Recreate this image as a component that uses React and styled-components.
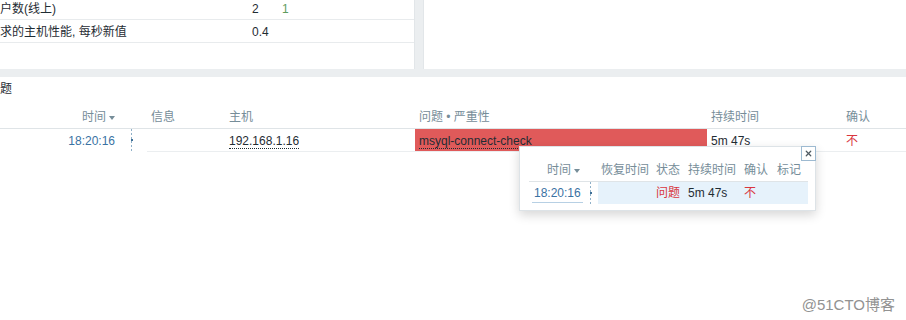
import React from "react";
import styled, { createGlobalStyle } from "styled-components";
import { X } from "lucide-react";

const GlobalStyle = createGlobalStyle`
  html, body {
    margin: 0;
    padding: 0;
  }
  body {
    background: #ebeef0;
    font-family: "Liberation Sans", Arial, "Noto Sans CJK SC", sans-serif;
    font-size: 12px;
    color: #1f2c33;
  }
`;

const Page = styled.div`
  position: relative;
  width: 906px;
  height: 320px;
  overflow: hidden;
  background: #ebeef0;
  display: flex;
  flex-direction: column;
  gap: 8px;
`;

const TopRow = styled.div`
  display: flex;
  gap: 8px;
  height: 69px;
  flex: none;
`;

const Widget = styled.div`
  background: #fff;
  box-sizing: border-box;
  overflow: hidden;
  ${(p) => (p.$width ? `width: ${p.$width}px; flex: none;` : "flex: 1;")}
  ${(p) => p.$borderRight && "border-right: 1px solid #e2e6e9;"}
  ${(p) => p.$borderLeft && "border-left: 1px solid #e2e6e9;"}
`;

const BottomWidget = styled.div`
  flex: 1;
  background: #fff;
`;

const WidgetHead = styled.div`
  height: 24px;
  line-height: 24px;
  font-size: 12px;
  color: #1f2c33;
`;

const Table = styled.table`
  table-layout: fixed;
  border-collapse: collapse;
  border-spacing: 0;
  width: ${(p) => p.$width}px;
  margin-top: ${(p) => p.$offset || 0}px;
`;

const ItemCell = styled.td`
  line-height: 14px;
  padding: 5px 4px 3px;
  border-bottom: 1px solid #e8ebed;
  white-space: nowrap;
  color: ${(p) => p.$color || "#1f2c33"};
  padding-left: ${(p) => (p.$flush ? 0 : 4)}px;
`;

const Th = styled.th`
  font-weight: normal;
  color: #768d99;
  text-align: ${(p) => p.$align || "left"};
  line-height: 14px;
  padding: 9px ${(p) => (p.$right ? p.$right : 4)}px 4px 4px;
  border-bottom: 1px solid #dfe4e7;
  white-space: nowrap;
`;

const Td = styled.td`
  line-height: 14px;
  padding: 5px ${(p) => (p.$right ? p.$right : 4)}px 3px ${(p) => (p.$bare ? 0 : 4)}px;
  text-align: ${(p) => p.$align || "left"};
  border-bottom: ${(p) => (p.$noLine ? "none" : "1px solid #ebeef0")};
  background: ${(p) => p.$bg || "transparent"};
  color: ${(p) => p.$color || "#1f2c33"};
  white-space: nowrap;
  ${(p) => p.$bare && "padding: 0;"}
`;

const SortArrow = styled.span`
  display: inline-block;
  width: 0;
  height: 0;
  margin-left: 3px;
  vertical-align: middle;
  border-left: 3px solid transparent;
  border-right: 3px solid transparent;
  border-top: 4px solid #768d99;
`;

const TimeLink = styled.span`
  color: #3a72a3;
  ${(p) => p.$underline && "border-bottom: 1px solid #b7d0e4; padding: 0 2px 2px;"}
`;

const DottedLink = styled.span`
  border-bottom: 1px dotted #1f2c33;
`;

const Timeline = styled.div`
  display: flex;
  align-items: center;
  justify-content: center;
  width: 1px;
  height: ${(p) => p.$h}px;
  margin-left: ${(p) => p.$offset}px;
  background: repeating-linear-gradient(to bottom, #8fb0c8 0 2px, transparent 2px 4px);
`;

const TimelineDot = styled.span`
  width: 2px;
  height: 2px;
  flex: none;
  background: #3f6f96;
`;

const Popup = styled.div`
  position: absolute;
  left: 519px;
  top: 146px;
  width: 297px;
  box-sizing: border-box;
  padding: 11px 7px 6px 9px;
  background: #fff;
  border: 1px solid #dde3e7;
  box-shadow: 0 4px 10px rgba(0, 0, 0, 0.16);
`;

const CloseButton = styled.button`
  position: absolute;
  top: -1px;
  right: -1px;
  width: 15px;
  height: 15px;
  padding: 0;
  display: flex;
  align-items: center;
  justify-content: center;
  background: #fff;
  border: 1px solid #9dbad1;
  color: #4f5b62;
  cursor: pointer;
`;

const PopTh = styled.th`
  font-weight: normal;
  color: #768d99;
  text-align: ${(p) => p.$align || "left"};
  line-height: 14px;
  padding: 5px ${(p) => (p.$right ? p.$right : 3)}px 4px 3px;
  border-bottom: 1px solid #dfe4e7;
  white-space: nowrap;
`;

const PopTd = styled.td`
  line-height: 14px;
  padding: 4px ${(p) => (p.$right ? p.$right : 3)}px 4px 3px;
  text-align: ${(p) => p.$align || "left"};
  background: ${(p) => (p.$band ? "#e6f2fb" : "transparent")};
  color: ${(p) => p.$color || "#1f2c33"};
  white-space: nowrap;
  ${(p) => p.$bare && "padding: 0;"}
`;

const Watermark = styled.div`
  position: absolute;
  right: 11px;
  bottom: 6px;
  font-size: 15px;
  line-height: 18px;
  color: #929292;
`;

const RED = "#d9363e";

export default function App() {
  return (
    <>
      <GlobalStyle />
      <Page>
        <TopRow>
          <Widget $width={415} $borderRight>
            <Table $width={414} $offset={-3}>
              <colgroup>
                <col style={{ width: 248 }} />
                <col style={{ width: 30 }} />
                <col />
              </colgroup>
              <tbody>
                <tr>
                  <ItemCell $flush>户数(线上)</ItemCell>
                  <ItemCell>2</ItemCell>
                  <ItemCell $color="#5e9c5e">1</ItemCell>
                </tr>
                <tr>
                  <ItemCell $flush>求的主机性能, 每秒新值</ItemCell>
                  <ItemCell>0.4</ItemCell>
                  <ItemCell />
                </tr>
              </tbody>
            </Table>
          </Widget>
          <Widget $borderLeft />
        </TopRow>

        <BottomWidget>
          <WidgetHead>题</WidgetHead>
          <Table $width={906}>
            <colgroup>
              <col style={{ width: 123 }} />
              <col style={{ width: 24 }} />
              <col style={{ width: 78 }} />
              <col style={{ width: 190 }} />
              <col style={{ width: 292 }} />
              <col style={{ width: 135 }} />
              <col />
            </colgroup>
            <thead>
              <tr>
                <Th $align="right" $right={8}>
                  时间<SortArrow />
                </Th>
                <Th />
                <Th>信息</Th>
                <Th>主机</Th>
                <Th>问题 • 严重性</Th>
                <Th>持续时间</Th>
                <Th>确认</Th>
              </tr>
            </thead>
            <tbody>
              <tr>
                <Td $align="right" $right={8} $noLine>
                  <TimeLink>18:20:16</TimeLink>
                </Td>
                <Td $bare $noLine>
                  <Timeline $h={22} $offset={8}>
                    <TimelineDot />
                  </Timeline>
                </Td>
                <Td />
                <Td>
                  <DottedLink>192.168.1.16</DottedLink>
                </Td>
                <Td $bg="#e05a5a">
                  <DottedLink>msyql-connect-check</DottedLink>
                </Td>
                <Td>5m 47s</Td>
                <Td $color={RED}>不</Td>
              </tr>
            </tbody>
          </Table>
        </BottomWidget>

        <Popup>
          <CloseButton aria-label="关闭">
            <X size={9} strokeWidth={3.2} />
          </CloseButton>
          <Table $width={279}>
            <colgroup>
              <col style={{ width: 55 }} />
              <col style={{ width: 14 }} />
              <col style={{ width: 55 }} />
              <col style={{ width: 32 }} />
              <col style={{ width: 56 }} />
              <col style={{ width: 33 }} />
              <col />
            </colgroup>
            <thead>
              <tr>
                <PopTh $align="right" $right={4}>
                  时间<SortArrow />
                </PopTh>
                <PopTh />
                <PopTh>恢复时间</PopTh>
                <PopTh>状态</PopTh>
                <PopTh>持续时间</PopTh>
                <PopTh>确认</PopTh>
                <PopTh>标记</PopTh>
              </tr>
            </thead>
            <tbody>
              <tr>
                <PopTd $align="right" $right={2}>
                  <TimeLink $underline>18:20:16</TimeLink>
                </PopTd>
                <PopTd $bare>
                  <Timeline $h={22} $offset={6}>
                    <TimelineDot />
                  </Timeline>
                </PopTd>
                <PopTd $band />
                <PopTd $band $color={RED}>问题</PopTd>
                <PopTd $band>5m 47s</PopTd>
                <PopTd $band $color={RED}>不</PopTd>
                <PopTd $band />
              </tr>
            </tbody>
          </Table>
        </Popup>

        <Watermark>@51CTO博客</Watermark>
      </Page>
    </>
  );
}
